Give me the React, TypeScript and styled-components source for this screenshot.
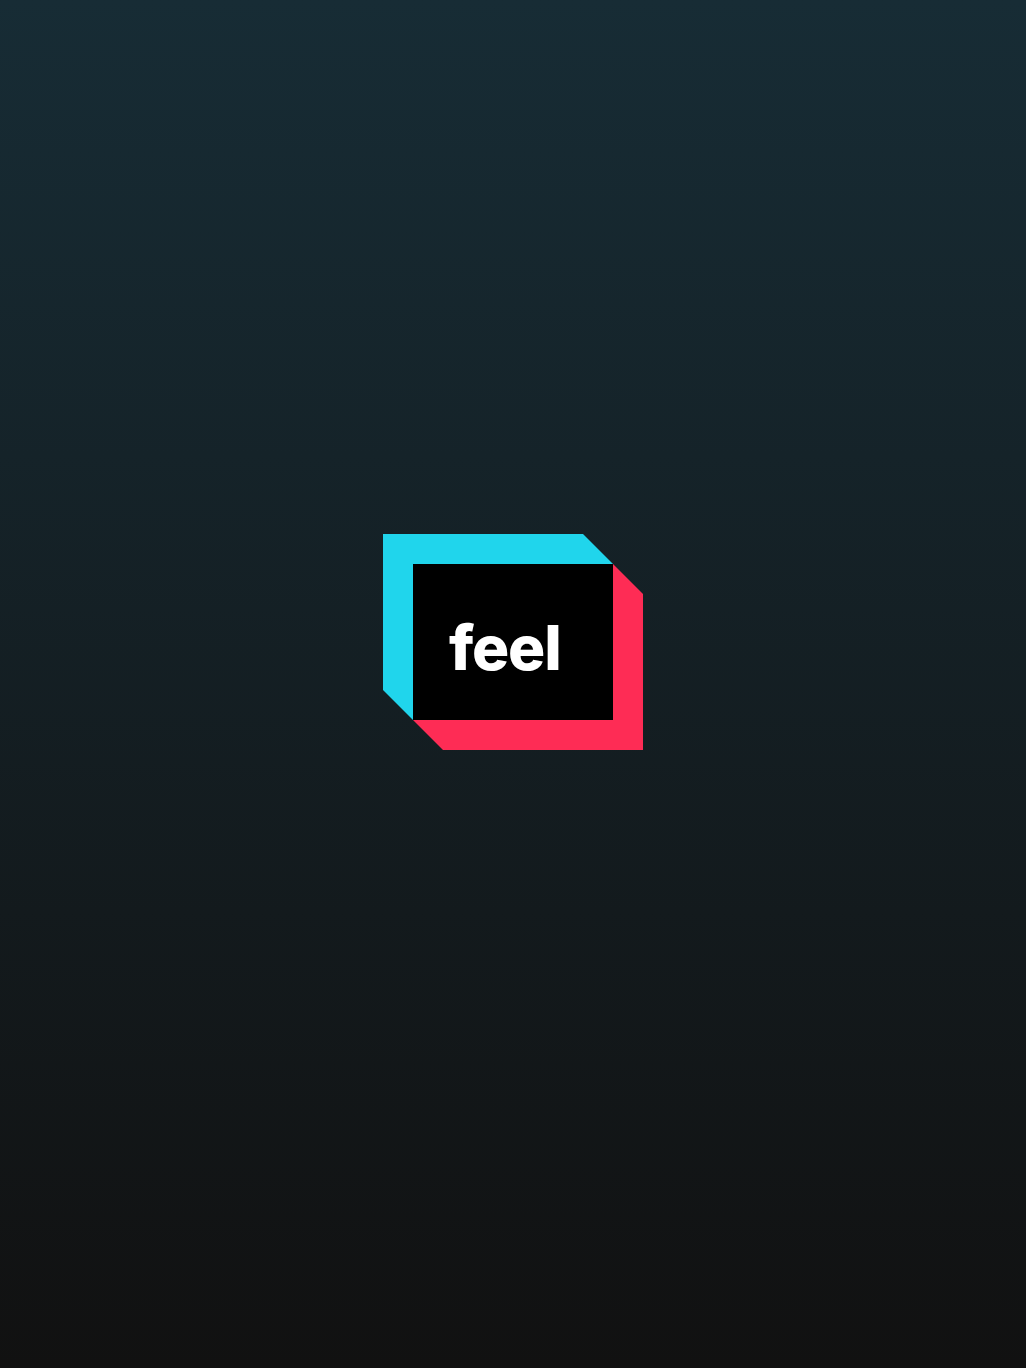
import React from "react";
import styled, { createGlobalStyle } from "styled-components";

const GlobalStyle = createGlobalStyle`
  html, body { margin: 0; padding: 0; height: 100%; }
  #root { height: 100%; }
`;

const Page = styled.main`
  box-sizing: border-box;
  height: 1368px;
  padding-bottom: 84px;
  display: flex;
  align-items: center;
  justify-content: center;
  background: linear-gradient(180deg, #172c35 0%, #111111 100%);
`;

const Logo = styled.div`
  position: relative;
  box-sizing: border-box;
  width: 260px;
  height: 216px;
  padding: 30px;
`;

const LogoFrame = styled.svg`
  position: absolute;
  inset: 0;
  width: 260px;
  height: 216px;
  display: block;
`;

const Tile = styled.div`
  position: relative;
  box-sizing: border-box;
  width: 200px;
  height: 156px;
  padding: 46px 0 0 36px;
  background: #000000;
`;

const Word = styled.span`
  display: block;
  font-family: Inter, "Liberation Sans", sans-serif;
  font-size: 62px;
  line-height: 75px;
  font-weight: 800;
  letter-spacing: -1.2px;
  color: #ffffff;
`;

export default function App() {
  return (
    <>
      <GlobalStyle />
      <Page>
        <Logo>
          <LogoFrame viewBox="0 0 260 216" aria-hidden="true">
            <polygon fill="#20d5ec" points="0,0 200,0 230,30 30,30 30,186 0,156" />
            <polygon fill="#fe2c55" points="230,30 260,60 260,216 60,216 30,186 230,186" />
          </LogoFrame>
          <Tile>
            <Word>feel</Word>
          </Tile>
        </Logo>
      </Page>
    </>
  );
}
